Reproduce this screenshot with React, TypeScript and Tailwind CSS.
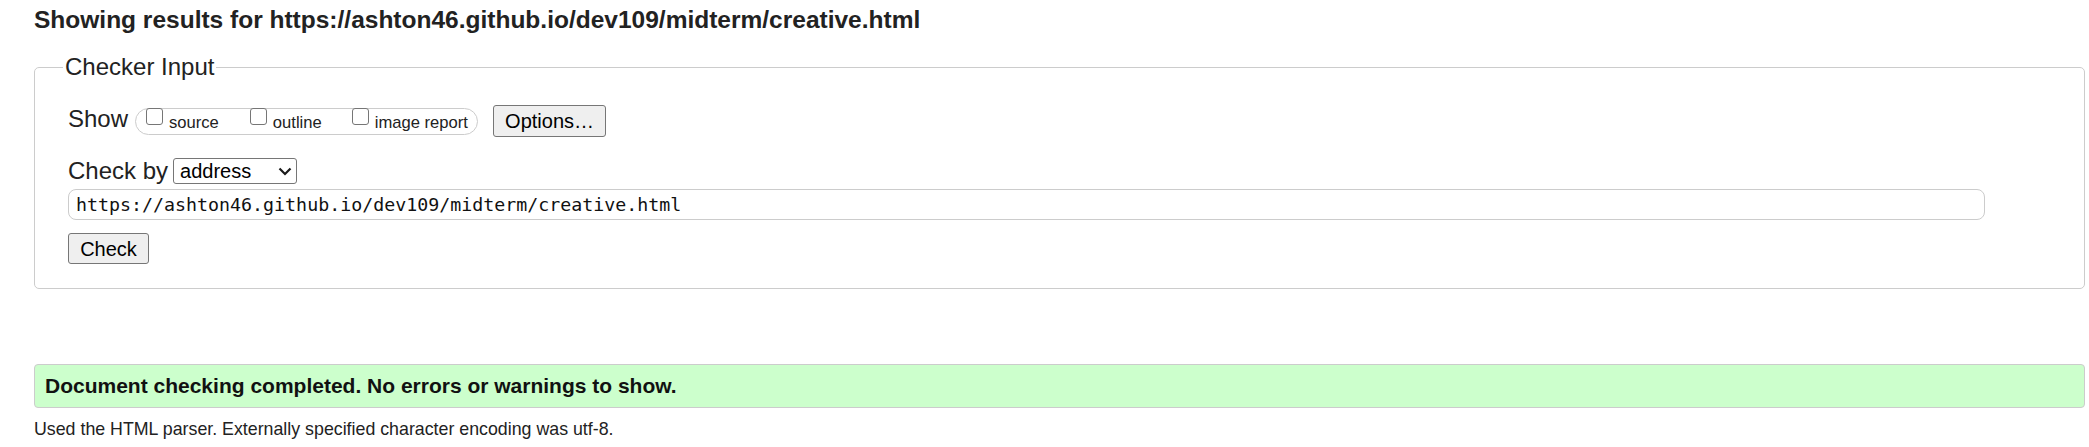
import React from "react";

const checkedUrl = "https://ashton46.github.io/dev109/midterm/creative.html";

const showOptions = [
  { label: "source", spacing: "ml-[10px]" },
  { label: "outline", spacing: "ml-[31px]" },
  { label: "image report", spacing: "ml-[30px]" },
];

const ShowOption = ({ label, spacing }: { label: string; spacing: string }) => (
  <label className={`flex items-start ${spacing}`}>
    <input
      type="checkbox"
      className="-mt-[1px] h-[17px] w-[17px] shrink-0 appearance-none rounded-[3px] border border-[#767676] bg-white"
    />
    <span className="ml-[6px] mt-[4px] text-[16.6px] leading-[19px]">{label}</span>
  </label>
);

const Chevron = () => (
  <svg width="14" height="9" viewBox="0 0 14 9" className="shrink-0">
    <path d="M1.5 1.5 L7 7 L12.5 1.5" fill="none" stroke="#1a1a1a" strokeWidth="2.2" />
  </svg>
);

const App = () => {
  return (
    <div className="min-h-screen bg-white pl-[34px] pr-[4px] font-['Liberation_Sans',Arial,sans-serif] text-[#222]">
      <h2 className="mt-[6px] text-[24.5px] font-bold leading-[28px]">
        Showing results for {checkedUrl}
      </h2>

      <fieldset className="mt-[19px] rounded-[5px] border border-[#ccc] pb-[24px] pl-[28px] pt-[24px]">
        <legend className="px-[2px] text-[24px] leading-[28px]">Checker Input</legend>

        <div className="ml-[5px]">
          <div className="flex h-[32px] items-center">
            <span className="mb-[4px] text-[24px] leading-[24px]">Show</span>
            <div className="ml-[7px] flex h-[27px] w-[343px] items-start rounded-full border border-[#ccc]">
              {showOptions.map((opt) => (
                <ShowOption key={opt.label} label={opt.label} spacing={opt.spacing} />
              ))}
            </div>
            <button className="ml-[15px] h-[32px] w-[113px] rounded-[3px] border border-[#767676] bg-[#efefef] text-[20px] leading-[24px] text-black">
              Options…
            </button>
          </div>

          <div className="mt-[21px] flex h-[26px] items-center">
            <span className="text-[24px] leading-[24px]">Check by</span>
            <div className="ml-[5px] flex h-[26px] w-[124px] items-center justify-between rounded-[3px] border border-[#767676] bg-white pl-[6px] pr-[4px] text-black">
              <span className="text-[20px] leading-[22px]">address</span>
              <Chevron />
            </div>
          </div>

          <input
            readOnly
            value={checkedUrl}
            className="mt-[5px] block h-[31px] w-[1917px] rounded-[8px] border border-[#ccc] bg-white px-[7px] font-['DejaVu_Sans_Mono',monospace] text-[18.3px] text-[#111] outline-none"
          />

          <button className="mt-[13px] block h-[31px] w-[81px] rounded-[3px] border border-[#767676] bg-[#efefef] text-[20px] leading-[24px] text-black">
            Check
          </button>
        </div>
      </fieldset>

      <div className="mt-[75px] flex h-[44px] items-center rounded-[4px] border border-[#ccc] bg-[#ccffcc] pl-[10px]">
        <p className="text-[21px] font-bold leading-[24px] text-[#111]">
          Document checking completed. No errors or warnings to show.
        </p>
      </div>

      <p className="mt-[10px] text-[17.8px] leading-[22px]">
        Used the HTML parser. Externally specified character encoding was utf-8.
      </p>
    </div>
  );
};

export default App;
